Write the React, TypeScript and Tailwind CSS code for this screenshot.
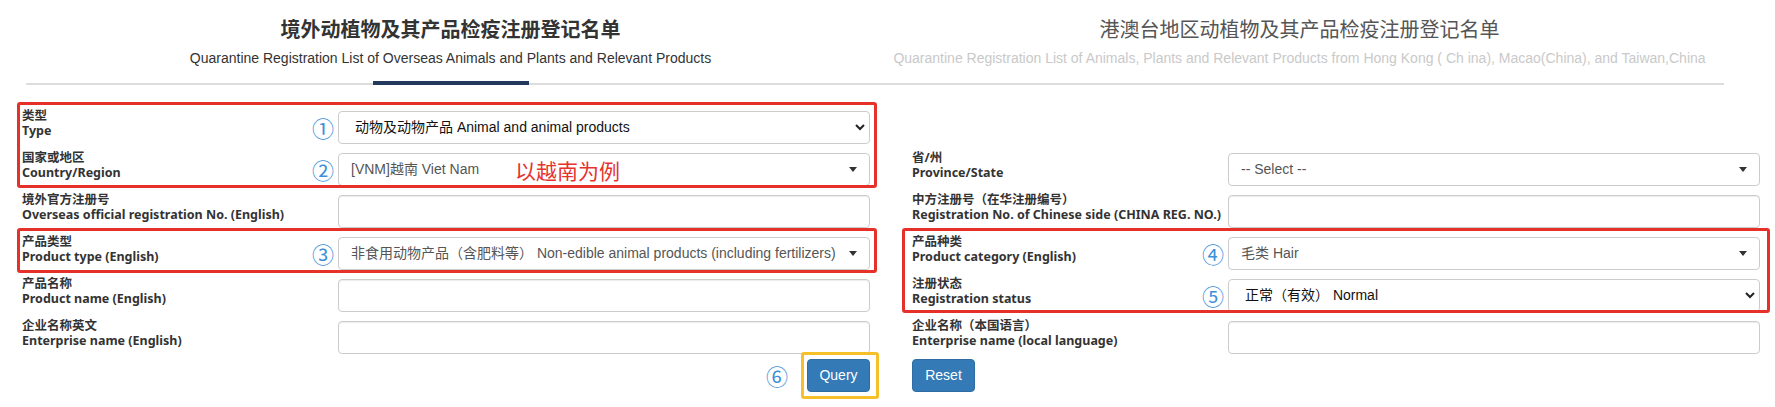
import React from 'react';

type Field = {
  zh: string;
  en: string;
  kind: 'input' | 'native' | 'select2';
  value?: string;
  mark?: string;
};

const leftFields: Field[] = [
  { zh: '类型', en: 'Type', kind: 'native', value: '动物及动物产品 Animal and animal products', mark: '①' },
  { zh: '国家或地区', en: 'Country/Region', kind: 'select2', value: '[VNM]越南 Viet Nam', mark: '②' },
  { zh: '境外官方注册号', en: 'Overseas official registration No. (English)', kind: 'input' },
  {
    zh: '产品类型',
    en: 'Product type (English)',
    kind: 'select2',
    value: '非食用动物产品（含肥料等） Non-edible animal products (including fertilizers)',
    mark: '③',
  },
  { zh: '产品名称', en: 'Product name (English)', kind: 'input' },
  { zh: '企业名称英文', en: 'Enterprise name (English)', kind: 'input' },
];

const rightFields: Field[] = [
  { zh: '省/州', en: 'Province/State', kind: 'select2', value: '-- Select --' },
  { zh: '中方注册号（在华注册编号）', en: 'Registration No. of Chinese side (CHINA REG. NO.)', kind: 'input' },
  { zh: '产品种类', en: 'Product category (English)', kind: 'select2', value: '毛类 Hair', mark: '④' },
  { zh: '注册状态', en: 'Registration status', kind: 'native', value: '正常（有效） Normal', mark: '⑤' },
  { zh: '企业名称（本国语言）', en: 'Enterprise name (local language)', kind: 'input' },
];

const Control = ({ f }: { f: Field }): JSX.Element => {
  const box =
    "flex-1 h-[33px] rounded-[4px] border border-[#ccc] bg-white flex items-center font-['Liberation_Sans','Noto_Sans_CJK_SC',sans-serif] text-[14px] whitespace-nowrap";
  if (f.kind === 'native') {
    return (
      <div className={`${box} pl-[16px] pr-[4px] text-[#111]`}>
        <span className="flex-1">{f.value}</span>
        <svg width="10" height="7" viewBox="0 0 10 7">
          <polyline points="1,1 5,5 9,1" fill="none" stroke="#222" strokeWidth="2" />
        </svg>
      </div>
    );
  }
  if (f.kind === 'select2') {
    return (
      <div className={`${box} pl-[12px] pr-[12px] text-[#555]`}>
        <span className="flex-1">{f.value}</span>
        <svg width="8" height="5" viewBox="0 0 8 5">
          <polygon points="0,0 8,0 4,5" fill="#333" />
        </svg>
      </div>
    );
  }
  return <div className={`${box} shadow-[inset_0_1px_1px_rgba(0,0,0,0.075)]`} />;
};

const Row = ({ f }: { f: Field }): JSX.Element => (
  <div className="flex h-[33px]">
    <div className="w-[316px] shrink-0 flex items-center justify-between">
      <div className="mb-[9px] text-[12.5px] leading-[15px] font-bold text-[#333] whitespace-nowrap">
        <div>{f.zh}</div>
        <div>{f.en}</div>
      </div>
      {f.mark && (
        <span className="mr-[4px] text-[22px] leading-none text-[#3d90d8] font-normal">{f.mark}</span>
      )}
    </div>
    <Control f={f} />
  </div>
);

export default function App(): JSX.Element {
  return (
    <div className="relative w-[1775px] h-[407px] overflow-hidden bg-white font-['Noto_Sans','Noto_Sans_CJK_SC',sans-serif]">
      <div className="ml-[26px] mr-[51px] flex border-b-2 border-[#ddd]">
        <div className="relative flex-1 text-center pt-[17px] pb-[17px]">
          <div className="text-[20px] leading-[24px] font-bold text-[#333] font-['Noto_Sans_CJK_SC',serif]">
            境外动植物及其产品检疫注册登记名单
          </div>
          <div className="mt-[9px] text-[14px] leading-[16px] text-[#333] font-['Liberation_Sans',sans-serif] whitespace-nowrap">
            Quarantine Registration List of Overseas Animals and Plants and Relevant Products
          </div>
          <div className="absolute left-1/2 -translate-x-1/2 bottom-[-2px] w-[156px] h-[4px] bg-[#23395d]" />
        </div>
        <div className="flex-1 text-center pt-[17px] pb-[17px]">
          <div className="text-[20px] leading-[24px] text-[#555] font-['Noto_Sans_CJK_SC',serif]">
            港澳台地区动植物及其产品检疫注册登记名单
          </div>
          <div className="mt-[9px] text-[14px] leading-[16px] text-[#c9c9c9] font-['Liberation_Sans',sans-serif] whitespace-nowrap">
            Quarantine Registration List of Animals, Plants and Relevant Products from Hong Kong ( Ch ina), Macao(China), and Taiwan,China
          </div>
        </div>
      </div>

      <div className="pl-[22px] pr-[15px] pt-[26px] grid grid-cols-[848px_848px] gap-x-[42px]">
        <div className="flex flex-col gap-[9px]">
          {leftFields.map((f) => (
            <Row key={f.en} f={f} />
          ))}
          <div className="mt-[-4px] flex justify-end items-center gap-[19px]">
            <span className="text-[22px] leading-none text-[#3d90d8]">⑥</span>
            <button className="w-[63px] h-[33px] rounded-[4px] border border-[#2e6da4] bg-[#337ab7] text-white text-[14px] font-['Liberation_Sans',sans-serif]">
              Query
            </button>
          </div>
        </div>
        <div className="flex flex-col gap-[9px]">
          <div className="h-[33px]" />
          {rightFields.map((f) => (
            <Row key={f.en} f={f} />
          ))}
          <div className="mt-[-4px] flex items-center">
            <button className="w-[63px] h-[33px] rounded-[4px] border border-[#2e6da4] bg-[#337ab7] text-white text-[14px] font-['Liberation_Sans',sans-serif]">
              Reset
            </button>
          </div>
        </div>
      </div>

      {/* annotation overlays */}
      <div className="absolute left-[17px] top-[102px] w-[860px] h-[86px] border-[3px] border-[#e6312b] rounded-[3px]" />
      <div className="absolute left-[17px] top-[228px] w-[860px] h-[45px] border-[3px] border-[#e6312b] rounded-[3px]" />
      <div className="absolute left-[902px] top-[228px] w-[868px] h-[85px] border-[3px] border-[#e6312b] rounded-[3px]" />
      <div className="absolute left-[801px] top-[352px] w-[78px] h-[47px] border-[3px] border-[#f6c02a] rounded-[3px]" />
      <div className="absolute left-[515px] top-[157px] text-[21px] leading-[26px] text-[#e5322d] font-['Noto_Sans_CJK_SC',sans-serif]">
        以越南为例
      </div>
    </div>
  );
}
